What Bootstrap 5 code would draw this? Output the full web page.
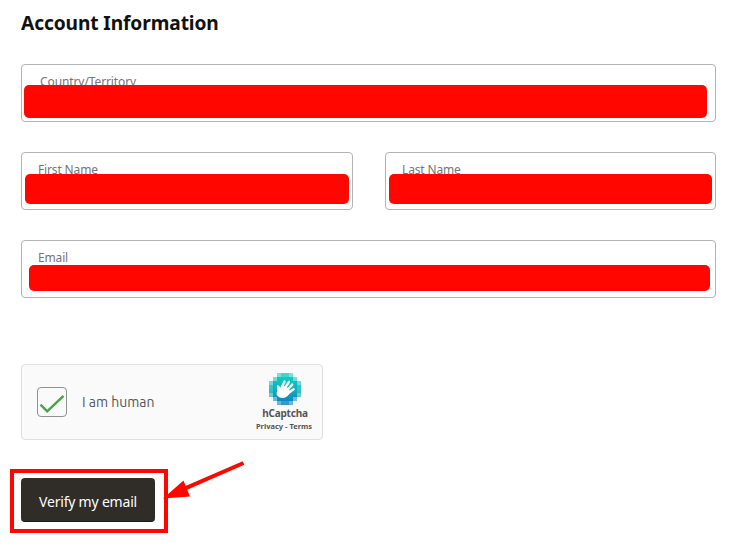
<!DOCTYPE html>
<html lang="en">
<head>
<meta charset="utf-8">
<meta name="viewport" content="width=device-width, initial-scale=1">
<title>Account Information</title>
<link href="https://cdn.jsdelivr.net/npm/bootstrap@5.3.0/dist/css/bootstrap.min.css" rel="stylesheet">
<style>
body{font-family:"Noto Sans","Open Sans",sans-serif;color:#111;background:#fff;height:548px;overflow:hidden}
.page{padding:9px 18px 0 21px}
.title{font-size:20px;font-weight:700;line-height:28px;margin-bottom:27px;letter-spacing:-.1px;transform:scaleX(.957);transform-origin:left}
.fields{display:grid;grid-template-columns:332px 331px;column-gap:32px;row-gap:30px}
.wide{grid-column:1/-1}
.field{height:58px;border:1px solid #b3b3b3;border-radius:4px;padding:9px 16px 0}
.field label{display:block;font-size:12px;line-height:16px;color:#757575;letter-spacing:-.15px;white-space:nowrap}
.field .indent{padding-left:2px;letter-spacing:-.1px}
.redact{position:absolute;background:#ff0700;border-radius:5px}
.r-country{left:2px;right:8px;top:20px;height:33px}
.r-name{left:3px;right:3px;top:21px;height:30px}
.r-email{left:7px;right:5px;top:24px;height:26px}
.captcha{width:302px;height:76px;margin-top:66px;background:#fafafa;border:1px solid #e0e0e0;border-radius:4px;padding:0 8px 0 15px;color:#555}
.tick{width:30px;height:30px;border:1px solid #919191;border-radius:4px;background:#fafafa}
.human{font-family:Ubuntu,"Noto Sans",sans-serif;font-size:14px;margin-left:15px;padding-top:1px;letter-spacing:0}
.brand{width:58px;padding-top:8px}
.name{font-size:10px;font-weight:700;line-height:12px;margin-top:2px;letter-spacing:-.2px}
.links{font-size:7.5px;font-weight:700;line-height:10px;margin:2px 2px 0 0;white-space:nowrap}
.action{width:134px;margin-top:38px}
.verify{width:134px;height:44px;background:#302d29;border:0;border-bottom:1px solid #1d1b19;border-radius:4px;color:#fff;font-size:14px;padding:4px 0 0;letter-spacing:-.2px}
.verify:hover{background:#302d29;color:#fff}
.outline{position:absolute;left:-11px;top:-9px;width:158px;height:64px;border:4px solid #ff0700;pointer-events:none}
.arrow{position:absolute;left:140px;top:-20px}
</style>
</head>
<body>
<main class="page">
  <h1 class="title">Account Information</h1>
  <form>
    <div class="fields">
      <div class="field wide position-relative"><label class="indent">Country/Territory</label><div class="redact r-country"></div></div>
      <div class="field position-relative"><label>First Name</label><div class="redact r-name"></div></div>
      <div class="field position-relative"><label>Last Name</label><div class="redact r-name"></div></div>
      <div class="field wide position-relative"><label>Email</label><div class="redact r-email"></div></div>
    </div>
    <div class="captcha d-flex">
      <div class="d-flex align-items-center flex-grow-1">
        <div class="tick"><svg class="d-block" width="28" height="28" viewBox="0 0 28 28"><path d="M2.5 16.7 9.2 23.3 25.5 7.8" fill="none" stroke="#45a648" stroke-width="2.5"/></svg></div>
        <span class="human">I am human</span>
      </div>
      <div class="brand d-flex flex-column align-items-center">
        <svg class="d-block" width="32" height="32" viewBox="0 0 32 32">
          <defs><linearGradient id="sea" gradientUnits="userSpaceOnUse" x1="0" y1="0" x2="0" y2="32"><stop offset="0" stop-color="#00d4bf"/><stop offset=".5" stop-color="#00aebd"/><stop offset="1" stop-color="#0074bf"/></linearGradient></defs>
          <g fill="url(#sea)" shape-rendering="crispEdges">
            <path opacity=".55" d="M8 0H24V4H28V8H32V24H28V28H24V32H8V28H4V24H0V8H4V4H8Z"/>
            <path opacity=".5" d="M12 0H20V4H24V8H28V12H32V20H28V24H24V28H20V32H12V28H8V24H4V20H0V12H4V8H8V4H12Z"/>
            <path opacity=".8" d="M8 4H24V8H28V24H24V28H8V24H4V8H8Z"/>
          </g>
          <path d="M11.5 17 15.5 8.6M14 18 20 8.8M16.5 19 23.2 11.6M18 21 24.6 16.2" fill="none" stroke="#fff" stroke-width="2.4" stroke-linecap="round"/>
          <path d="M8.2 18C9 15.5 7.4 13.8 8 12.5 9.3 11.6 11 13.2 11.4 15.2L13.5 12.5 17 13.5 20 16 21 19.5C19 24.3 14.5 26.3 10.3 24.3 7.4 22.8 7 20.5 8.2 18Z" fill="#fff"/>
        </svg>
        <div class="name">hCaptcha</div>
        <div class="links">Privacy - Terms</div>
      </div>
    </div>
    <div class="action position-relative">
      <button type="button" class="btn verify d-block">Verify my email</button>
      <div class="outline"></div>
      <svg class="arrow" width="90" height="50" viewBox="161 458 90 50"><path d="M243.5 463 184 488.8" stroke="#ff0700" stroke-width="4"/><path d="M163 498.5 183.5 480.5 190 496.5Z" fill="#ff0700"/></svg>
    </div>
  </form>
</main>
<script src="https://cdn.jsdelivr.net/npm/bootstrap@5.3.0/dist/js/bootstrap.bundle.min.js"></script>
</body>
</html>
